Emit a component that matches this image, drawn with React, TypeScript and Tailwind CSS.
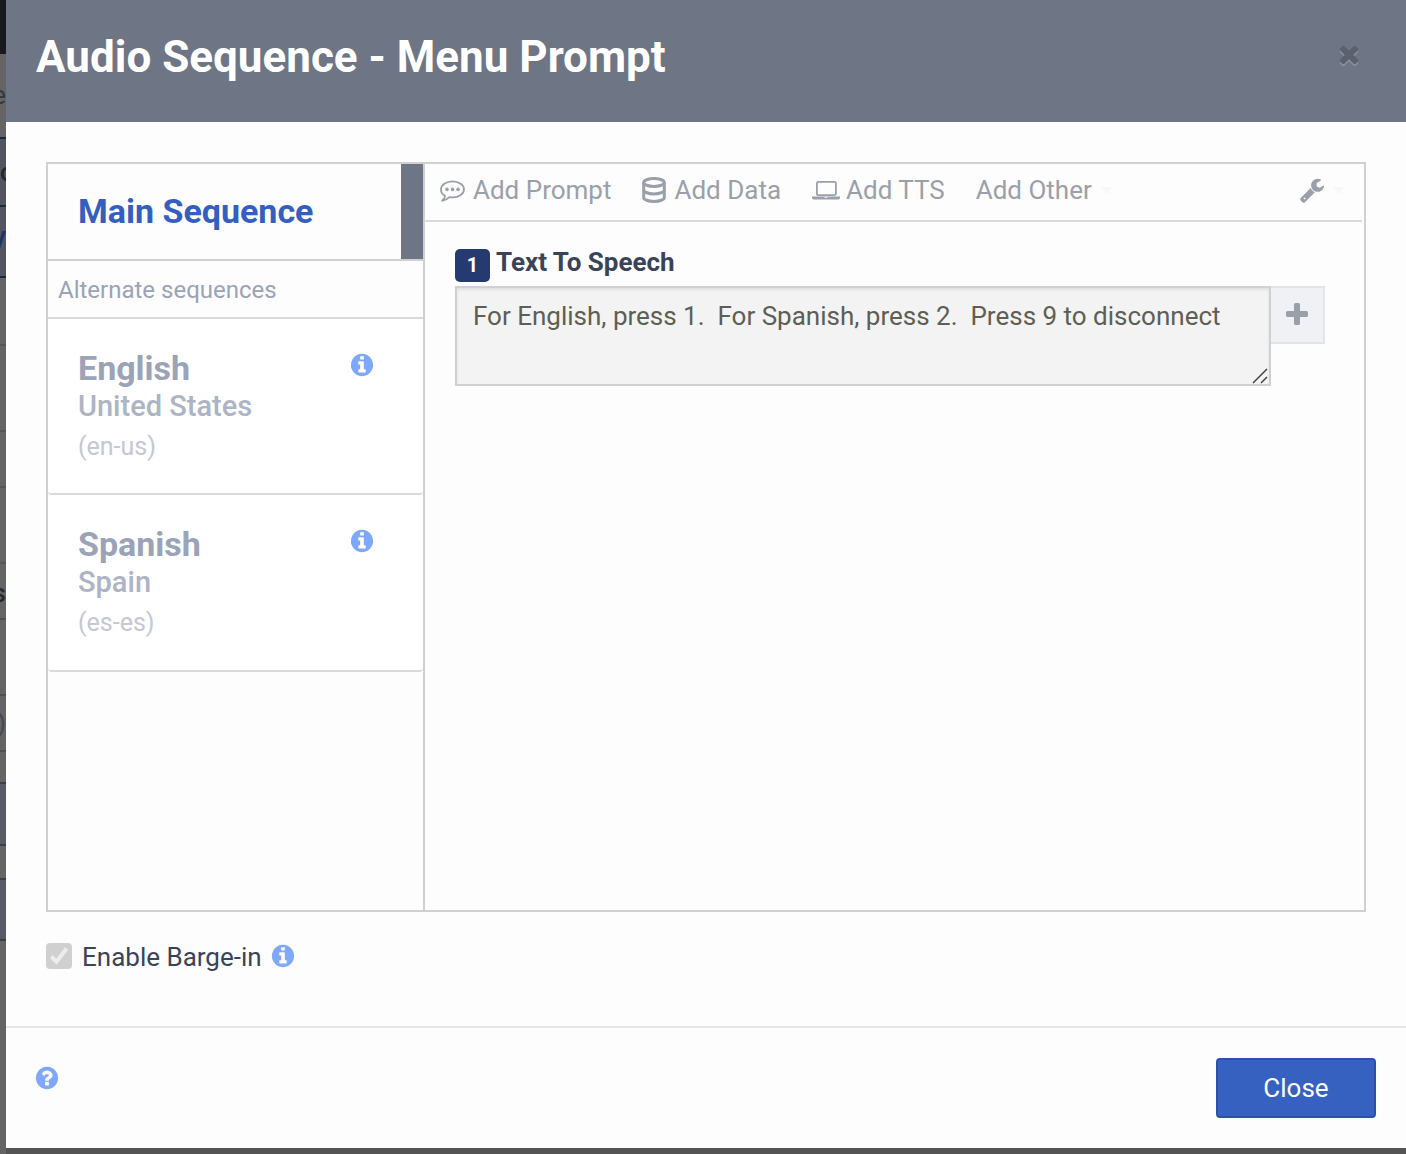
import type { ReactNode } from "react";

const INFO =
  "M1152 1376v-160q0-14-9-23t-23-9h-96v-512q0-14-9-23t-23-9h-320q-14 0-23 9t-9 23v160q0 14 9 23t23 9h96v320h-96q-14 0-23 9t-9 23v160q0 14 9 23t23 9h448q14 0 23-9t9-23zm-128-896v-160q0-14-9-23t-23-9h-192q-14 0-23 9t-9 23v160q0 14 9 23t23 9h192q14 0 23-9t9-23zm640 416q0 209-103 385.5t-279.5 279.5-385.5 103-385.5-103-279.5-279.5-103-385.5 103-385.5 279.5-279.5 385.5-103 385.5 103 279.5 279.5 103 385.5z";
const QUESTION =
  "M1024 1376v-192q0-14-9-23t-23-9h-192q-14 0-23 9t-9 23v192q0 14 9 23t23 9h192q14 0 23-9t9-23zm256-672q0-88-55.5-163t-138.5-116-170-41q-243 0-371 213-15 24 8 42l132 100q7 6 19 6 16 0 25-12 53-68 86-92 34-24 86-24 48 0 85.5 26t37.5 59q0 38-20 61t-68 45q-63 28-115.5 86.5t-52.5 125.5v36q0 14 9 23t23 9h192q14 0 23-9t9-23q0-19 21.5-49.5t54.5-49.5q32-18 49-28.5t46-35 44.5-48 28-60.5 12.5-81zm384 192q0 209-103 385.5t-279.5 279.5-385.5 103-385.5-103-279.5-279.5-103-385.5 103-385.5 279.5-279.5 385.5-103 385.5 103 279.5 279.5 103 385.5z";
const WRENCH =
  "M448 1472q0-26-19-45t-45-19-45 19-19 45 19 45 45 19 45-19 19-45zm644-420l-682 682q-37 37-90 37-52 0-91-37l-106-108q-38-36-38-90 0-53 38-91l681-681q39 98 114.5 173.5t173.5 114.5zm634-435q0 39-23 106-47 134-164.5 217.5t-258.5 83.5q-185 0-316.5-131.5t-131.5-316.5 131.5-316.5 316.5-131.5q58 0 121.5 16.5t107.5 46.5q16 11 16 28t-16 28l-293 169v224l193 107q5-3 79-48.5t135.5-81 70.5-35.5q15 0 23.5 10t8.5 25z";
const PLUS =
  "M1600 736v192q0 40-28 68t-68 28h-416v416q0 40-28 68t-68 28h-192q-40 0-68-28t-28-68v-416h-416q-40 0-68-28t-28-68v-192q0-40 28-68t68-28h416v-416q0-40 28-68t68-28h192q40 0 68 28t28 68v416h416q40 0 68 28t28 68z";
const TIMES =
  "M1490 1322q0 40-28 68l-136 136q-28 28-68 28t-68-28l-294-294-294 294q-28 28-68 28t-68-28l-136-136q-28-28-28-68t28-68l294-294-294-294q-28-28-28-68t28-68l136-136q28-28 68-28t68 28l294 294 294-294q28-28 68-28t68 28l136 136q28 28 28 68t-28 68l-294 294 294 294q28 28 28 68z";

function Glyph({ d, className }: { d: string; className: string }) {
  return (
    <svg viewBox="0 0 1792 1792" fill="currentColor" className={className} aria-hidden="true">
      <path d={d} />
    </svg>
  );
}

function SpeechIcon() {
  return (
    <svg viewBox="0 0 26 26" className="h-[26px] w-[26px]" fill="none" stroke="currentColor" strokeWidth="1.8" strokeLinejoin="round" aria-hidden="true">
      <path d="M13.500 4.400c6.500 0 11.500 3.600 11.500 8s-5 8-11.500 8c-1.100 0-2.100-.1-3.100-.3C8.400 22 6 23.400 3.200 23.800c1.600-1.300 2.500-2.500 2.900-5C3.300 17.300 2 15 2 12.400c0-4.400 5-8 11.500-8z" />
      <g fill="currentColor" stroke="none">
        <circle cx="8" cy="12.400" r="1.800" />
        <circle cx="13.500" cy="12.400" r="1.800" />
        <circle cx="19" cy="12.400" r="1.800" />
      </g>
    </svg>
  );
}

function DatabaseIcon() {
  return (
    <svg viewBox="0 0 24 26" className="h-[26px] w-6" fill="none" stroke="currentColor" strokeWidth="3" aria-hidden="true">
      <ellipse cx="12" cy="5.500" rx="10.300" ry="3.900" />
      <path d="M1.700 5.500v15c0 2.200 4.600 3.900 10.300 3.900s10.300-1.700 10.300-3.900v-15" />
      <path d="M1.700 13c0 2.200 4.600 3.900 10.300 3.900s10.300-1.700 10.300-3.900" />
    </svg>
  );
}

function LaptopIcon() {
  return (
    <svg viewBox="0 0 28 20" className="h-5 w-7" fill="none" aria-hidden="true">
      <rect x="4.900" y="1.900" width="19" height="13.300" rx="1.500" stroke="currentColor" strokeWidth="1.800" />
      <path fillRule="evenodd" fill="currentColor" d="M0 16.500h28v1.200c0 1-1 1.800-2.300 1.800H2.300C1 19.500 0 18.700 0 17.700zM12.500 17.300v.7h3v-.7z" />
    </svg>
  );
}

function Caret() {
  return <span className="border-x-[7px] border-t-[7px] border-x-transparent border-t-[#f8f8f8]" />;
}

function InfoButton({ label }: { label: string }) {
  return (
    <button aria-label={label} className="h-[26px] w-[26px] text-[#7fa8fb]">
      <Glyph d={INFO} className="h-[26px] w-[26px]" />
    </button>
  );
}

function Tool({ icon, label }: { icon: ReactNode; label: string }) {
  return (
    <button className="flex h-full items-center gap-2 whitespace-nowrap">
      {icon}
      {label}
    </button>
  );
}

function Sequence({ name, region, code }: { name: string; region: string; code: string }) {
  return (
    <li className="flex h-[176px] items-start justify-between rounded-sm border-b-2 border-[#dadada] bg-white pt-[29px] pr-12 pl-[30px] last:h-[177px]">
      <div>
        <h3 className="text-[34px] leading-10 font-bold text-[#9aa3b7]">{name}</h3>
        <p className="text-[29px] leading-9 font-medium text-[#acb4c5]">{region}</p>
        <p className="mt-1 text-[25px] leading-[38px] text-[#c3c8d3]">{code}</p>
      </div>
      <div className="mt-1">
        <InfoButton label={"About " + name} />
      </div>
    </li>
  );
}

function Backdrop() {
  return (
    <div aria-hidden="true" className="flex w-[6px] shrink-0 flex-col overflow-hidden bg-[#646464] text-[26px] text-[#25272c]">
      <div className="h-[54px] bg-[#18191a]" />
      <div className="flex h-[83px] items-center justify-end text-[#343841]">e</div>
      <div className="flex h-[70px] items-center justify-start border-y-2 border-[#1a2746] bg-[#51565e] font-medium">c</div>
      <div className="flex h-[71px] items-center justify-end border-b-2 border-[#1a2746] bg-[#51565e] font-medium text-[#1c3468]">V</div>
      <div className="h-[68px] border-b-2 border-[#555]" />
      <div className="h-[86px] border-b-2 border-[#555]" />
      <div className="h-[56px] border-b-2 border-[#555]" />
      <div className="h-[76px] border-b-2 border-[#555]" />
      <div className="flex h-[56px] items-center justify-end border-b-2 border-[#505050] pt-1 font-medium">s</div>
      <div className="h-[76px] border-b-2 border-[#505050]" />
      <div className="flex h-[56px] items-center justify-end border-b-2 border-[#505050] text-[#444955]">)</div>
      <div className="h-[30px]" />
      <div className="h-[64px] border-y-2 border-[#3a3f49] bg-[#575b63]" />
      <div className="h-[32px]" />
      <div className="h-[63px] border-y-2 border-[#3a3f49] bg-[#575b63]" />
      <div className="flex-1" />
    </div>
  );
}

export default function App() {
  return (
    <div className="flex min-h-screen bg-[#545454] font-[Roboto,sans-serif]">
      <Backdrop />
      <main className="mb-[6px] flex min-w-0 flex-1 flex-col bg-[#fdfdfd]">
        <header className="flex h-[122px] items-start justify-between bg-[#6e7585] pt-7 pr-[43px] pl-[30px]">
          <h1 className="text-[44px] leading-[58px] font-bold text-white">Audio Sequence - Menu Prompt</h1>
          <button aria-label="Close dialog" className="mt-3 text-[#5a606d] drop-shadow-[0_2px_0_#8b919e]">
            <Glyph d={TIMES} className="h-7 w-7" />
          </button>
        </header>

        <div className="flex flex-1 flex-col px-10 pt-10">
          <div className="flex h-[750px] border-2 border-[#d0d0d0]">
            <nav className="w-[377px] shrink-0 border-r-2 border-[#d0d0d0]">
              <button className="flex h-[97px] w-full items-stretch justify-between border-b-2 border-[#d0d0d0] pl-[30px] text-[34px] font-bold text-[#345fbf]">
                <span className="self-center">Main Sequence</span>
                <span className="w-[22px] bg-[#6e7585]" />
              </button>
              <h2 className="flex h-[58px] items-center border-b-2 border-[#dadada] pt-[2px] pl-[10px] text-[24px] text-[#9aa3b7]">
                Alternate sequences
              </h2>
              <ul>
                <Sequence name="English" region="United States" code="(en-us)" />
                <Sequence name="Spanish" region="Spain" code="(es-es)" />
              </ul>
            </nav>

            <section className="min-w-0 flex-1">
              <div className="mr-[2px] flex h-[58px] items-center gap-[31px] border-b-2 border-[#dadada] pr-4 pb-1 pl-[14px] text-[26px] text-[#9aa0aa]">
                <Tool icon={<SpeechIcon />} label="Add Prompt" />
                <Tool icon={<DatabaseIcon />} label="Add Data" />
                <button className="flex h-full items-center gap-[6px] whitespace-nowrap">
                  <LaptopIcon />
                  Add TTS
                </button>
                <button className="flex items-center gap-2 whitespace-nowrap">
                  Add Other
                  <Caret />
                </button>
                <button aria-label="Tools" className="ml-auto flex items-center gap-[7px]">
                  <Glyph d={WRENCH} className="h-[26px] w-[26px]" />
                  <Caret />
                </button>
              </div>

              <div className="pt-6 pr-[39px] pl-[30px]">
                <label htmlFor="speech" className="flex h-10 items-start gap-[6px] text-[26px] leading-8 font-bold text-[#3a4458]">
                  <span className="mt-[3px] flex h-[33px] w-[35px] items-center justify-center rounded-[5px] bg-[#243a70] pb-[2px] text-[20px] text-white">1</span>
                  Text To Speech
                </label>
                <div className="flex items-start">
                  <div className="relative min-w-0 flex-1">
                    <textarea
                      id="speech"
                      readOnly
                      className="block h-[100px] w-full resize-none overflow-hidden border-2 border-[#d0d0d0] bg-[#f3f3f3] px-4 py-[10px] text-[26px] leading-9 text-[#5d5e55] shadow-[inset_0_2px_3px_rgba(0,0,0,0.08)] outline-none"
                      defaultValue="For English, press 1.  For Spanish, press 2.  Press 9 to disconnect"
                    />
                    <svg viewBox="0 0 16 16" className="absolute right-[3px] bottom-[2px] h-4 w-4" stroke="#444" strokeWidth="1.500" aria-hidden="true">
                      <path d="M1 15 15 1M9 15l6-6" />
                    </svg>
                  </div>
                  <button aria-label="Add" className="flex h-[58px] w-[54px] items-center justify-center border-2 border-l-0 border-[#e1e5eb] bg-[#eff1f5] text-[#9aa0aa]">
                    <Glyph d={PLUS} className="h-7 w-7" />
                  </button>
                </div>
              </div>
            </section>
          </div>

          <div className="mt-[25px] flex items-center text-[26px] leading-9 text-[#3a4458]">
            <span className="relative mr-[10px] h-[26px] w-[26px]">
              <input id="barge" type="checkbox" defaultChecked disabled className="block h-[26px] w-[26px] appearance-none rounded bg-[#d0d0d0]" />
              <svg viewBox="0 0 26 26" className="pointer-events-none absolute inset-0 h-[26px] w-[26px]" fill="none" stroke="#ececec" strokeWidth="4" aria-hidden="true">
                <path d="M5.300 13.500l5.200 5.200L20.500 5.500" />
              </svg>
            </span>
            <label htmlFor="barge" className="mr-2 pt-[2px]">Enable Barge-in</label>
            <InfoButton label="About barge-in" />
          </div>
        </div>

        <footer className="flex h-[122px] items-start justify-between border-t-2 border-[#e5e5e5] pt-[30px] pr-[30px] pl-7">
          <button aria-label="Help" className="mt-[7px] text-[#7fa8fb]">
            <Glyph d={QUESTION} className="h-[26px] w-[26px]" />
          </button>
          <button className="h-[60px] w-40 rounded border-2 border-[#2b51a8] bg-[#3661c1] text-[26px] text-white">Close</button>
        </footer>
      </main>
    </div>
  );
}
